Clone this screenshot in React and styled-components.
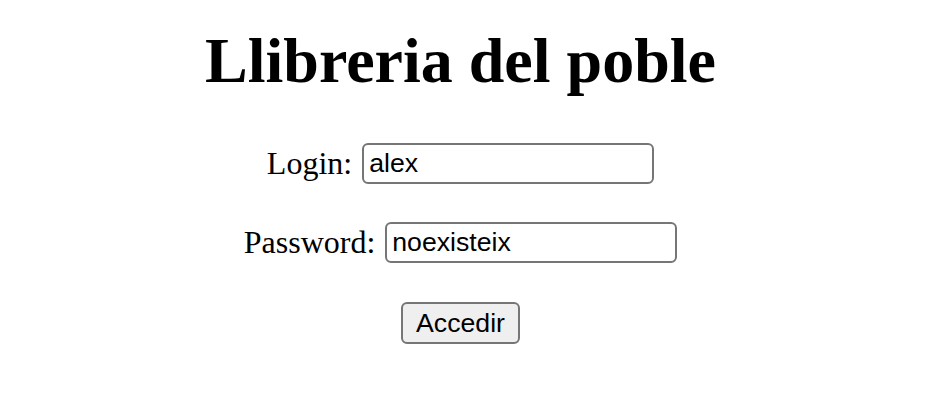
import React from "react";
import styled, { createGlobalStyle } from "styled-components";

const Global = createGlobalStyle`
  html, body { margin: 0; padding: 0; background: #ffffff; }
  body {
    font-family: "Liberation Serif", "Times New Roman", serif;
    font-size: 32px;
    color: #000000;
  }
`;

const Page = styled.div`
  width: 921px;
  padding-top: 24px;
  display: flex;
  flex-direction: column;
  align-items: center;
`;

const Title = styled.h1`
  margin: 0;
  font-size: 64px;
  font-weight: bold;
  line-height: 74px;
`;

const Form = styled.form`
  margin-top: 45px;
  display: flex;
  flex-direction: column;
  align-items: center;
  gap: 38px;
`;

const Row = styled.div`
  display: flex;
  align-items: center;
  justify-content: center;
  gap: 10px;
  margin-top: ${(p) => p.$extra || 0}px;
`;

const Label = styled.label`
  font-size: 32px;
  line-height: 37px;
`;

const Input = styled.input`
  box-sizing: border-box;
  width: 292px;
  height: 41px;
  margin: 0;
  padding: 2px 5px;
  border: 2px solid #767676;
  border-radius: 6px;
  background: #ffffff;
  font-family: "Liberation Sans", Arial, sans-serif;
  font-size: 26.67px;
  color: #000000;
  outline: none;
`;

const Button = styled.button`
  box-sizing: border-box;
  width: 119px;
  height: 42px;
  margin: 0;
  padding: 0 12px;
  border: 2px solid #767676;
  border-radius: 6px;
  background: #efefef;
  font-family: "Liberation Sans", Arial, sans-serif;
  font-size: 26.67px;
  color: #000000;
`;

export default function App() {
  return (
    <>
      <Global />
      <Page>
        <Title>Llibreria del poble</Title>
        <Form onSubmit={(e) => e.preventDefault()}>
          <Row>
            <Label htmlFor="login">Login:</Label>
            <Input id="login" type="text" defaultValue="alex" />
          </Row>
          <Row>
            <Label htmlFor="password">Password:</Label>
            <Input id="password" type="text" defaultValue="noexisteix" />
          </Row>
          <Row $extra={1}>
            <Button type="submit">Accedir</Button>
          </Row>
        </Form>
      </Page>
    </>
  );
}
